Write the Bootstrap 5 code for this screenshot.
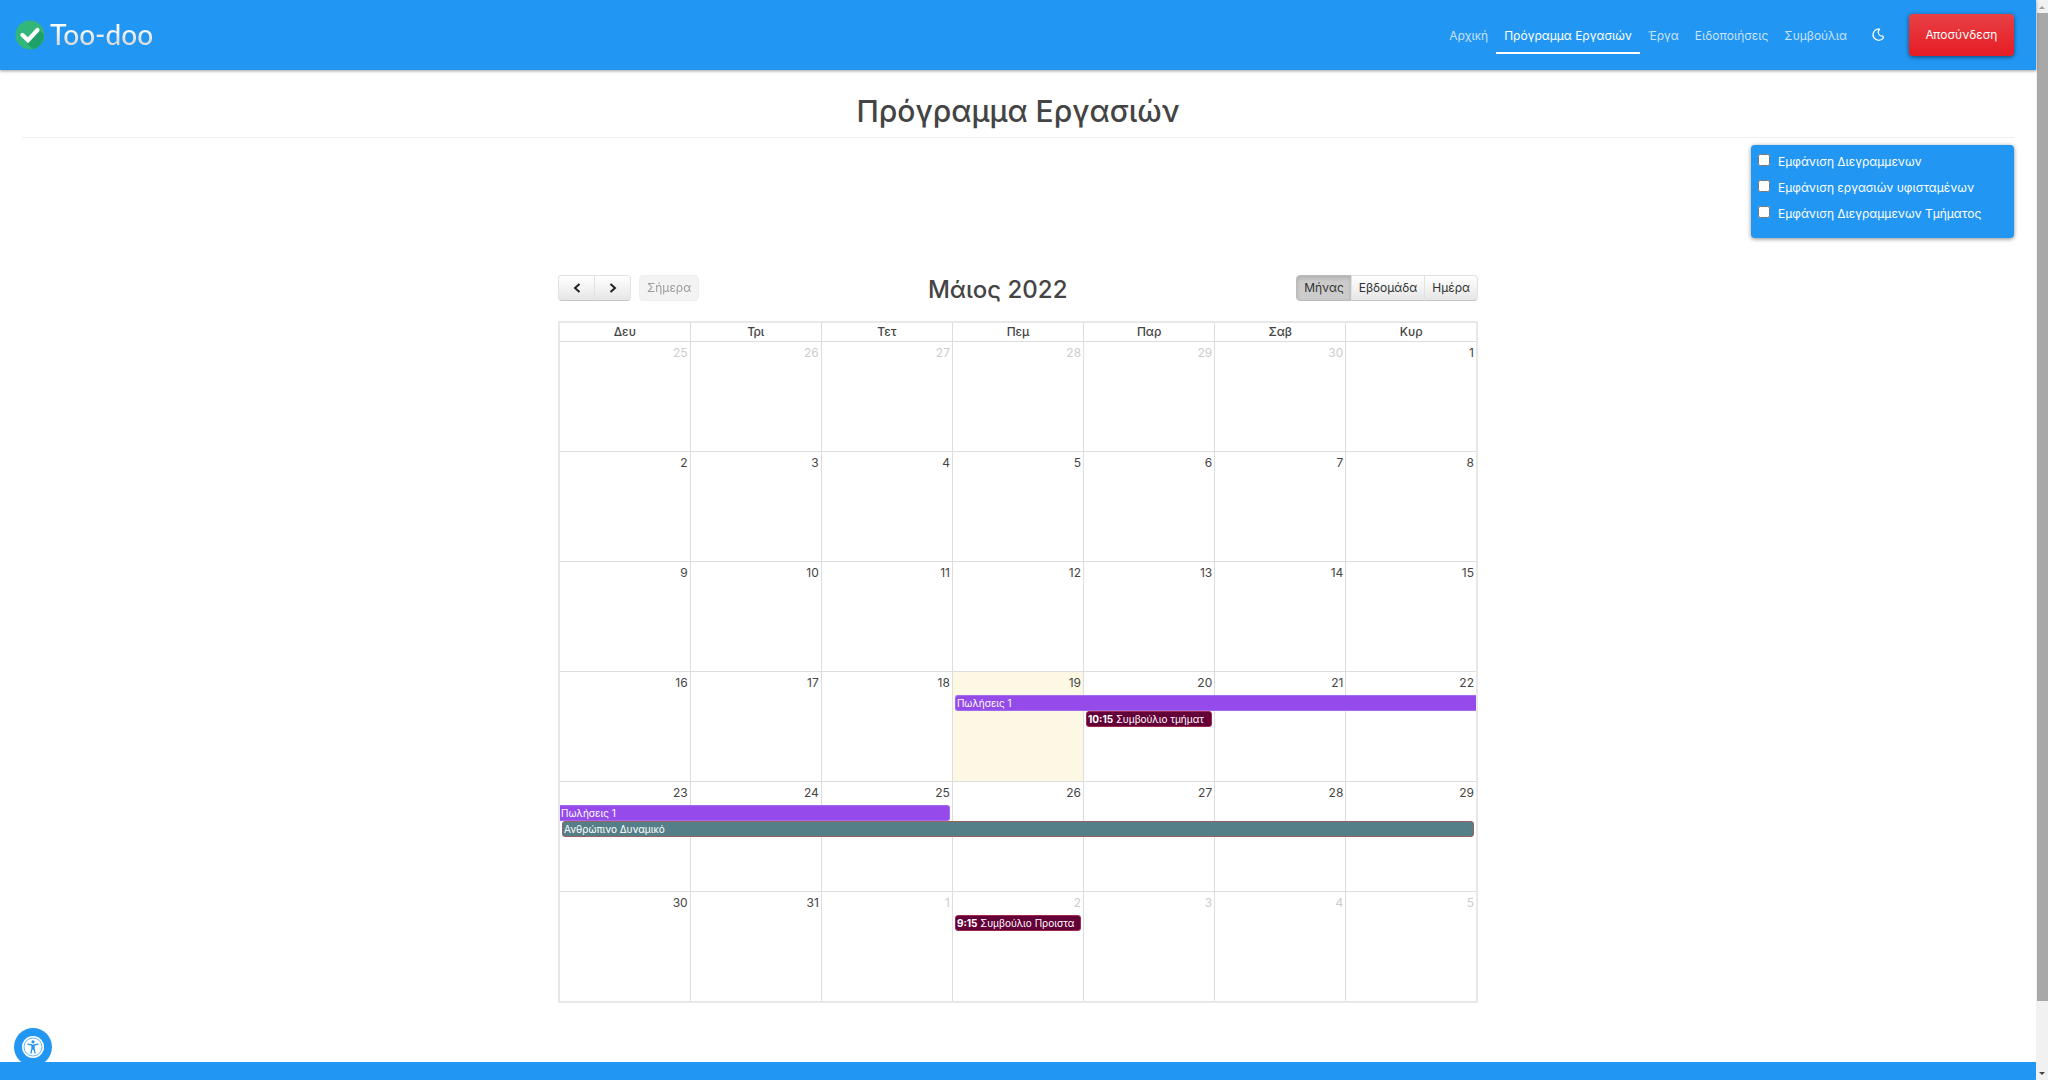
<!DOCTYPE html>
<html lang="el">
<head>
<meta charset="utf-8">
<meta name="viewport" content="width=device-width, initial-scale=1">
<title>Too-doo</title>
<link href="https://cdn.jsdelivr.net/npm/bootstrap@5.3.0/dist/css/bootstrap.min.css" rel="stylesheet">
<style>
:root { --brand: #2196f3; }
body { font-family: Inter, "Noto Sans", sans-serif; font-size: 12px; color: #444; background: #fff; }
.topbar { background: var(--brand); height: 70px; padding: 0 22px 0 15px; box-shadow: 0 1px 3px rgba(0,0,0,.4); position: relative; z-index: 2; }
.brand-word { font-family: Lato, sans-serif; font-weight: 500; font-size: 28px; line-height: 30px; margin: 0 0 2px 1px; background: linear-gradient(#fff 30%, #ddd 75%); -webkit-background-clip: text; background-clip: text; color: transparent; }
.topbar .nav-link { color: rgba(255,255,255,.75); padding: 10px 8px 7px; line-height: 18px; border-bottom: 2px solid transparent; }
.topbar .nav-link.active { color: #fff; border-bottom-color: #fff; }
.logout { color: #fff; font-size: 12px; height: 42px; width: 105px; padding: 0; border: 0; border-radius: 4px; background: linear-gradient(#e84046, #e61c23); box-shadow: 0 1px 4px rgba(0,0,0,.55); }
.content { padding: 0 22px; }
.page-heading { font-size: 30px; line-height: 40px; font-weight: 500; padding: 21px 0 6px; border-bottom: 1px solid #eee; margin-bottom: 7px; }
.filters { background: var(--brand); color: #fff; width: 263px; height: 93px; padding: 4px 7px; border-radius: 4px; box-shadow: 0 1px 4px rgba(0,0,0,.45); }
.filters label { line-height: 26px; }
.filters input { width: 12px; height: 12px; margin: 5px 8px 0 0; }
.calendar { max-width: 920px; margin-top: 37px; }
.calendar h2 { font-size: 24px; line-height: 30px; font-weight: 500; }
.cal-btn { font-size: 12px; line-height: 16px; padding: 4px 7px; height: 26px; color: #333; border: 1px solid #e2e2e2; border-bottom-color: #c6c6c6; background: linear-gradient(#fff, #e6e6e6); border-radius: 4px; }
.cal-btn.on { background: #ccc; border-color: #bbb; box-shadow: inset 0 2px 4px rgba(0,0,0,.15); }
.cal-btn.arrow { width: 37px; }
.cal-btn:disabled { color: #666; background: #eee; border-color: #e6e6e6; }
.month { width: 100%; table-layout: fixed; border-collapse: collapse; margin-top: 16px; border: 2px solid #e8e8e8; }
.month th, .month td { border: 1px solid #ddd; padding: 0; }
.month th { text-align: center; font-weight: 500; line-height: 18px; height: 19px; }
.month td { height: 110px; vertical-align: top; }
.month time { display: block; text-align: right; padding: 3px 2px 0; line-height: 16px; margin-bottom: 4px; }
.month .muted { color: #ccc; }
.month .today { background: #fcf8e3; }
.event { position: relative; z-index: 1; display: block; margin: 0 2px; height: 16px; padding: 0 1px; line-height: 14px; font-size: 10px; color: #fff; text-decoration: none; white-space: nowrap; overflow: hidden; border: 1px solid; border-radius: 3px; }
.event.purple { background: #944bea; border-color: #a66aee; }
.event.teal { background: #557f88; border-color: #99615f; }
.event.wine { background: #630038; border-color: #a0294a; }
.event.goes-on { width: calc(400% + 1px); border-right: 0; border-radius: 3px 0 0 3px; }
.event.came-in { margin-left: 0; width: calc(300% + 1px); border-left: 0; border-radius: 0 3px 3px 0; }
.event.full-week { width: calc(700% + 5px); }
.event.second-line { margin-top: 20px; }
.footbar { background: var(--brand); height: 18px; position: relative; z-index: 2; }
.access { position: absolute; left: 14px; bottom: 14px; width: 38px; height: 38px; padding: 0; border: 0; border-radius: 50%; background: var(--brand); z-index: 1; }
.scroller { width: 12px; background: #f1f1f1; flex: none; }
.thumb { background: #a8a8a8; margin-left: 1px; flex: 1; }
.scroll-gap { height: 66px; }
</style>
<script src="https://cdn.jsdelivr.net/npm/bootstrap@5.3.0/dist/js/bootstrap.bundle.min.js"></script>
</head>
<body class="d-flex min-vh-100">
<div class="d-flex flex-column flex-grow-1 position-relative">
  <header class="topbar d-flex align-items-center justify-content-between">
    <a href="#" class="d-flex align-items-center text-decoration-none">
      <svg width="30" height="30" viewBox="0 0 30 30" class="me-1" aria-hidden="true"><circle cx="15" cy="15" r="14.5" fill="#33b679"/><path d="M13 21 24 9.500 29 14.500A14.500 14.500 0 0 1 18 29.200l-6-6z" fill="#1fa06b"/><path d="m7.500 15 5.500 5.200L22.500 10" fill="none" stroke="#fff" stroke-width="4.200" stroke-linecap="round"/></svg>
      <span class="brand-word">Too-doo</span>
    </a>
    <div class="d-flex align-items-center">
      <nav class="nav flex-nowrap" aria-label="Κύριο μενού">
        <a class="nav-link" href="#">Αρχική</a>
        <a class="nav-link active" aria-current="page" href="#">Πρόγραμμα Εργασιών</a>
        <a class="nav-link" href="#">Έργα</a>
        <a class="nav-link" href="#">Ειδοποιήσεις</a>
        <a class="nav-link" href="#">Συμβούλια</a>
      </nav>
      <button type="button" class="btn p-0 border-0 mx-3 d-flex" aria-label="Σκούρο θέμα"><svg width="14" height="14" viewBox="0 0 14 14" fill="none" stroke="#fff" stroke-width="1.300" stroke-linejoin="round"><path d="M6.300 1.200A5.700 5.700 0 1 0 12.400 10 2.800 2.800 0 0 1 12 8.200 4.400 4.400 0 0 1 7.200 4.300 3.800 3.800 0 0 1 8.600 1.200z"/></svg></button>
      <button type="button" class="btn logout ms-2">Αποσύνδεση</button>
    </div>
  </header>
  <main class="content flex-grow-1">
    <h1 class="page-heading text-center">Πρόγραμμα Εργασιών</h1>
    <form class="filters ms-auto">
      <div class="d-flex align-items-start"><input type="checkbox" id="f1"><label for="f1">Εμφάνιση Διεγραμμενων</label></div>
      <div class="d-flex align-items-start"><input type="checkbox" id="f2"><label for="f2">Εμφάνιση εργασιών υφισταμένων</label></div>
      <div class="d-flex align-items-start"><input type="checkbox" id="f3"><label for="f3">Εμφάνιση Διεγραμμενων Τμήματος</label></div>
    </form>
    <section class="calendar mx-auto">
      <div class="d-flex justify-content-between align-items-start">
        <div class="d-flex gap-2">
          <div class="btn-group">
            <button type="button" class="btn cal-btn arrow" aria-label="Προηγούμενος"><svg width="8" height="10" viewBox="0 0 8 10" class="d-block mx-auto" fill="none" stroke="#222" stroke-width="2"><path d="M6.500 1 2 5l4.500 4"/></svg></button>
            <button type="button" class="btn cal-btn arrow" aria-label="Επόμενος"><svg width="8" height="10" viewBox="0 0 8 10" class="d-block mx-auto" fill="none" stroke="#222" stroke-width="2"><path d="M1.500 1 6 5 1.500 9"/></svg></button>
          </div>
          <button type="button" class="btn cal-btn" disabled>Σήμερα</button>
        </div>
        <h2 class="mb-0">Μάιος 2022</h2>
        <div class="btn-group">
          <button type="button" class="btn cal-btn on">Μήνας</button>
          <button type="button" class="btn cal-btn">Εβδομάδα</button>
          <button type="button" class="btn cal-btn">Ημέρα</button>
        </div>
      </div>
      <table class="month">
        <thead><tr><th>Δευ</th><th>Τρι</th><th>Τετ</th><th>Πεμ</th><th>Παρ</th><th>Σαβ</th><th>Κυρ</th></tr></thead>
        <tbody>
          <tr><td class="muted"><time>25</time></td><td class="muted"><time>26</time></td><td class="muted"><time>27</time></td><td class="muted"><time>28</time></td><td class="muted"><time>29</time></td><td class="muted"><time>30</time></td><td><time>1</time></td></tr>
          <tr><td><time>2</time></td><td><time>3</time></td><td><time>4</time></td><td><time>5</time></td><td><time>6</time></td><td><time>7</time></td><td><time>8</time></td></tr>
          <tr><td><time>9</time></td><td><time>10</time></td><td><time>11</time></td><td><time>12</time></td><td><time>13</time></td><td><time>14</time></td><td><time>15</time></td></tr>
          <tr><td><time>16</time></td><td><time>17</time></td><td><time>18</time></td><td class="today"><time>19</time><a href="#" class="event purple goes-on">Πωλήσεις 1</a></td><td><time>20</time><a href="#" class="event wine second-line"><b>10:15</b> Συμβούλιο τμήματ</a></td><td><time>21</time></td><td><time>22</time></td></tr>
          <tr><td><time>23</time><a href="#" class="event purple came-in">Πωλήσεις 1</a><a href="#" class="event teal full-week">Ανθρώπινο Δυναμικό</a></td><td><time>24</time></td><td><time>25</time></td><td><time>26</time></td><td><time>27</time></td><td><time>28</time></td><td><time>29</time></td></tr>
          <tr><td><time>30</time></td><td><time>31</time></td><td class="muted"><time>1</time></td><td class="muted"><time>2</time><a href="#" class="event wine"><b>9:15</b> Συμβούλιο Προιστα</a></td><td class="muted"><time>3</time></td><td class="muted"><time>4</time></td><td class="muted"><time>5</time></td></tr>
        </tbody>
      </table>
    </section>
  </main>
  <button type="button" class="access" aria-label="Προσβασιμότητα"><svg width="22" height="22" viewBox="0 0 22 22" class="d-block mx-auto"><circle cx="11" cy="11" r="11" fill="#fff"/><circle cx="11" cy="11" r="9" fill="none" stroke="#2196f3" stroke-width=".7"/><circle cx="11" cy="5.800" r="1.600" fill="#2196f3"/><path d="M6 8.200l4 .9v3.400L9 17M16 8.200l-4 .9v3.400L13 17M10.500 9.500h1v3.500h-1z" fill="none" stroke="#2196f3" stroke-width="1.300" stroke-linecap="round"/></svg></button>
  <footer class="footbar"></footer>
</div>
<div class="scroller d-flex flex-column" aria-hidden="true">
  <svg width="12" height="13" viewBox="0 0 12 13"><path d="M3 9l3-3 3 3z" fill="#a0a0a0"/></svg>
  <div class="thumb"></div>
  <div class="scroll-gap"></div>
  <svg width="12" height="13" viewBox="0 0 12 13"><path d="M3 5l3 3 3-3z" fill="#444"/></svg>
</div>
</body>
</html>
